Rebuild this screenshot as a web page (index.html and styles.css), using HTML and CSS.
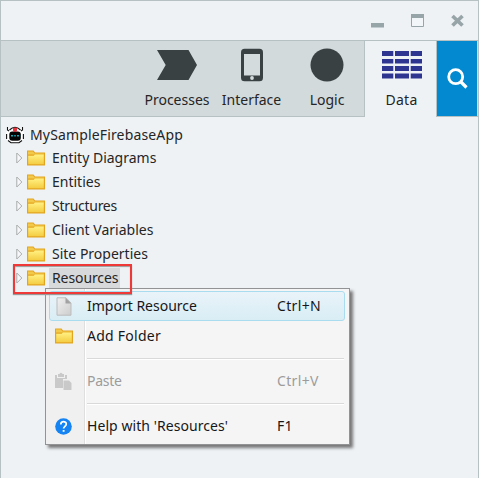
FILE: index.html
```html
<!DOCTYPE html>
<html lang="en">
<head>
<meta charset="utf-8">
<title>MySampleFirebaseApp</title>
<link rel="stylesheet" href="styles.css">
</head>
<body>
<svg width="0" height="0" class="defs">
  <defs>
    <linearGradient id="gold" x1="0" y1="0" x2="0" y2="1"><stop offset="0" stop-color="#fff184"/><stop offset="1" stop-color="#f5cd43"/></linearGradient>
    <linearGradient id="sheet" x1="0" y1="0" x2="1" y2="1"><stop offset="0" stop-color="#f0f0f0"/><stop offset="1" stop-color="#cdcdcd"/></linearGradient>
    <symbol id="folder" viewBox="0 0 18 16">
      <path d="M0 15.500V.5h6.500l1.500 2h10v13z" fill="#e3a520"/>
      <path d="M1 3V1.500h5l1.500 2H17v1H1z" fill="#f3c94b"/>
      <path d="M1.200 5.700h5.500l1.200-1.200h8.900v9.700H1.200z" fill="url(#gold)"/>
    </symbol>
    <symbol id="arrow" viewBox="0 0 7 12"><path d="M.8 1v10l5-5z" fill="#f7f8f9" stroke="#a9abad"/></symbol>
  </defs>
</svg>
<div class="window">
  <header class="titlebar">
    <svg class="controls" width="94" height="16" viewBox="0 0 94 16">
      <path d="M0 10h13v4.500H0z" fill="#97a4a8"/>
      <path d="M40.500 1.500h12v12h-12z" fill="#f3f6f8" stroke="#97a4a8"/><path d="M40 1h13v4H40z" fill="#97a4a8"/>
      <path d="M81.500 3l10 9.500M91.500 3l-10 9.500" stroke="#97a4a8" stroke-width="3.700"/>
    </svg>
  </header>
  <nav class="toolbar">
    <div class="tab processes">
      <svg width="40" height="34" viewBox="0 0 40 34"><path d="M0 2h31.500L40 17l-8.500 15H0l8.700-15z" fill="#394143"/></svg>
      <span>Processes</span>
    </div>
    <div class="tab interface">
      <svg width="24" height="34" viewBox="0 0 24 34"><rect x="1" y=".7" width="22" height="32.600" rx="3.500" fill="#394143"/><path d="M4 6h16v21.500H4z" fill="#d4dbdc"/><circle cx="12" cy="30" r="1.900" fill="#d4dbdc"/></svg>
      <span>Interface</span>
    </div>
    <div class="tab logic">
      <svg width="34" height="34" viewBox="0 0 34 34"><circle cx="17" cy="17" r="16.500" fill="#394143"/></svg>
      <span>Logic</span>
    </div>
    <div class="tab data">
      <svg width="40" height="34" viewBox="0 0 40 34"><path d="M0 3h11.300v5H0zM13 3h14v5H13zM28.700 3H40v5H28.700zM0 11h11.300v4.500H0zM13 11h14v4.500H13zM28.700 11H40v4.500H28.700zM0 18h11.300v5H0zM13 18h14v5H13zM28.700 18H40v5H28.700zM0 25.500h11.300v5H0zM13 25.500h14v5H13zM28.700 25.500H40v5H28.700z" fill="#2d3590"/></svg>
      <span>Data</span>
    </div>
    <div class="search">
      <svg width="21" height="21" viewBox="0 0 21 21" fill="none" stroke="#fff" stroke-width="2.800"><circle cx="8.700" cy="8.700" r="7"/><path d="M13.500 13.500l6 6" stroke-width="3.200"/></svg>
    </div>
  </nav>
  <main class="tree">
    <div class="root">
      <svg width="18" height="18" viewBox="0 0 18 18">
        <path d="M1 4C-.5 9 0 14 3 16l3 1.500h6l3-1.500c3-2 3.500-7 2-12l-1-3-2 2Q9-1 4 3L2 1z" fill="#fff"/>
        <path d="M1.500 1v3l1.500 1M16.500 1v3L15 5M.6 8v5M17.400 8v5M2 14.500l3 2.300h8l3-2.300M3.500 4Q9-1.500 14.500 4" fill="none" stroke="#111" stroke-width="1.100"/>
        <path d="M7 1.700h4v2.800L9 6 7 4.500z" fill="#e5313b"/><rect x="3.300" y="5.500" width="11.500" height="9.300" rx="3" fill="#050505"/>
        <path d="M7.500 5.700h3V3h-3z" fill="#e5313b"/>
        <path d="M5 9.700h2M8.200 9.700h1.600M11 9.700h2" stroke="#19a9b6" stroke-width="1.500"/>
      </svg>
      <span class="app-name">MySampleFirebaseApp</span>
    </div>
    <div class="node"><svg class="arrow"><use href="#arrow"/></svg><svg class="folder"><use href="#folder"/></svg><span>Entity Diagrams</span></div>
    <div class="node"><svg class="arrow"><use href="#arrow"/></svg><svg class="folder"><use href="#folder"/></svg><span>Entities</span></div>
    <div class="node"><svg class="arrow"><use href="#arrow"/></svg><svg class="folder"><use href="#folder"/></svg><span class="tight">Structures</span></div>
    <div class="node"><svg class="arrow"><use href="#arrow"/></svg><svg class="folder"><use href="#folder"/></svg><span>Client Variables</span></div>
    <div class="node"><svg class="arrow"><use href="#arrow"/></svg><svg class="folder"><use href="#folder"/></svg><span>Site Properties</span></div>
    <div class="node selected"><svg class="arrow"><use href="#arrow"/></svg><svg class="folder"><use href="#folder"/></svg><span>Resources</span></div>
  </main>
</div>
<div class="menu">
  <div class="item active">
    <svg width="16" height="19" viewBox="0 0 16 19"><path d="M1 .8h9l5 5.200v12.200H1z" fill="url(#sheet)" stroke="#bcbcbc"/><path d="M9.500.8V6.500H15z" fill="#a2a2a2"/></svg>
    <span class="label">Import Resource</span><span class="key">Ctrl+N</span>
  </div>
  <div class="item"><svg width="18" height="16"><use href="#folder"/></svg><span class="label wide">Add Folder</span></div>
  <div class="separator"></div>
  <div class="item disabled">
    <svg width="17" height="19" viewBox="0 0 17 19" fill="#c9c9c9"><path d="M0 3h2v3h8V3h2v4H8v9H0z"/><path d="M3 5V2h1.500q1.500-2.500 3 0H9v3z"/><path d="M8.500 8.500h5.500l2.500 2.500v7h-8z"/></svg>
    <span class="label tight">Paste</span><span class="key">Ctrl+V</span>
  </div>
  <div class="separator"></div>
  <div class="item">
    <svg width="17" height="17" viewBox="0 0 17 17"><circle cx="8.500" cy="8.500" r="8.300" fill="#1683f2"/><path d="M5.800 6.400c0-3.700 5.500-3.500 5.500-.3 0 2.200-2.700 2.200-2.700 4.400" fill="none" stroke="#fff" stroke-width="1.700"/><path d="M7.700 12h1.800v1.800H7.700z" fill="#fff"/></svg>
    <span class="label help">Help with 'Resources'</span><span class="key">F1</span>
  </div>
</div>
<div class="highlight"></div>
</body>
</html>
```
FILE: styles.css
```css
* { box-sizing: border-box; }
body { margin: 0; width: 479px; height: 478px; overflow: hidden; background: #eef2f5; color: #252527; font: 14px/20px "Noto Sans", "Open Sans", sans-serif; }
svg { display: block; flex: none; }
span { white-space: nowrap; }
.defs { position: absolute; }
.window { height: 478px; border: 1px solid #b6c1c4; border-bottom: 0; }
.titlebar { height: 40px; display: flex; justify-content: flex-end; padding: 12px 13px 0 0; border-bottom: 1px solid #b6c1c4; }
.toolbar { display: flex; justify-content: flex-end; height: 76px; padding-right: 1px; background: #d2dadc; border-bottom: 1px solid #b6c1c4; }
.tab { display: flex; flex-direction: column; align-items: center; padding-top: 7px; padding-left: 2px; gap: 8px; }
.processes { width: 74px; }
.interface { width: 75px; }
.logic { width: 76px; }
.data { width: 73px; height: 76px; background: #eef2f5; border: 1px solid #b6c1c4; border-width: 0 1px; }
.data span { letter-spacing: .25px; }
.search { width: 40px; height: 75px; display: flex; align-items: center; justify-content: center; background: #0389cf; }
.tree { padding-top: 6px; }
.root { height: 23px; display: flex; align-items: center; gap: 6px; padding-left: 5px; }
.app-name { letter-spacing: .15px; }
.node { height: 24px; display: flex; align-items: center; padding-left: 15px; }
.node span { padding: 0 3px; }
.node .tight, .label.tight { letter-spacing: -.28px; }
.arrow { width: 7px; height: 12px; margin-right: 4px; }
.folder { width: 18px; height: 16px; margin-right: 4px; }
.node.selected span { padding-right: 2px; background: #d8d9da; letter-spacing: -.1px; }
.menu { position: absolute; left: 45px; top: 288px; width: 305px; height: 157px; padding: 2px 4px 2px 3px; border: 1px solid #929395; background: linear-gradient(90deg, #f0f0f0 0 38px, #dfdfdf 38px 39px, #fff 39px 40px, #f5f5f5 40px); box-shadow: 3px 3px 3px #777; }
.item { display: grid; grid-template-columns: 31px 190px 1fr; height: 30px; align-items: center; padding-left: 4px; border: 1px solid transparent; border-radius: 3px; color: #171719; }
.item svg { justify-self: center; margin-right: 12px; }
.active { background: linear-gradient(#e9f3f9, #d9edf5); border-color: #aadcef; }
.label { padding-left: 2px; }
.label.wide { letter-spacing: .25px; }
.label.help { letter-spacing: .06px; }
.key { padding-left: 2px; letter-spacing: .35px; }
.item.disabled { color: #9c9c9c; }
.separator { height: 2px; margin: 7px 1px 6px 38px; border-top: 1px solid #d9d9d9; border-bottom: 1px solid #fff; }
.highlight { position: absolute; left: 13px; top: 264px; width: 119px; height: 30px; border: 2px solid #ef3939; box-shadow: 0 1px 1px #999, inset 0 1px 1px #999; }
```
